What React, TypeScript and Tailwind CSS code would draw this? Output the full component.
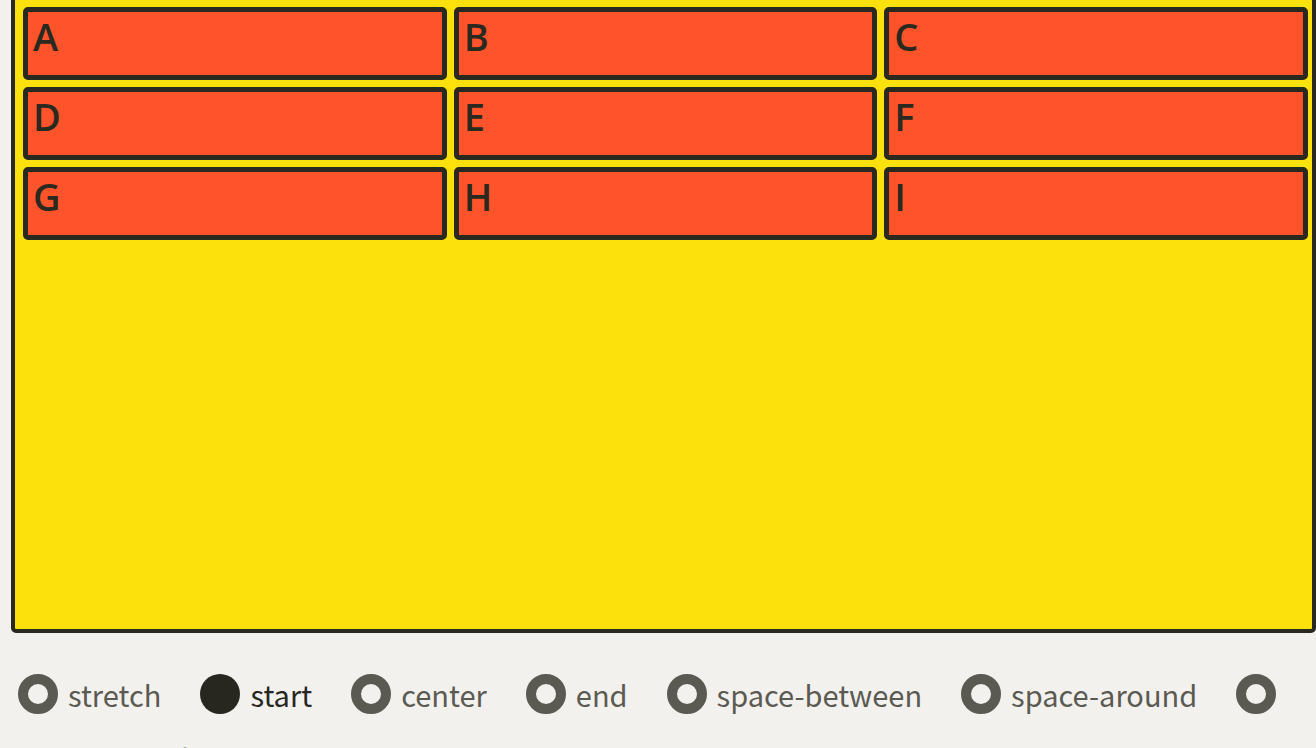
import React from "react";

const items = ["A", "B", "C", "D", "E", "F", "G", "H", "I"];
const options = ["stretch", "start", "center", "end", "space-between", "space-around", "space-evenly"];

export default function App() {
  return (
    <div className="min-h-screen w-full overflow-hidden bg-[#f2f1ed]">
      <div className="ml-[11px] mt-[-5px] w-[1305px] h-[638px] border-4 border-[#2a2920] rounded-[5px] bg-[#fde10d] pt-2 pl-2 pr-1 grid grid-cols-3 gap-[7px] content-start">
        {items.map((l) => (
          <div
            key={l}
            className="h-[73px] border-[5px] border-[#2a2920] rounded-[5px] bg-[#ff532c] pl-[5px] text-[38px] font-semibold text-[#2a2920] leading-[48px]"
            style={{ fontFamily: '"Open Sans", sans-serif' }}
          >
            {l}
          </div>
        ))}
      </div>
      <div
        className="mt-[41px] pl-[18px] flex flex-wrap items-center gap-y-6 text-[29px] leading-[40px]"
        style={{ fontFamily: '"Noto Sans CJK KR", sans-serif' }}
      >
        {options.map((o) => {
          const sel = o === "start";
          return (
            <React.Fragment key={o}>
              {sel ? (
                <span className="w-10 h-10 rounded-full bg-[#27261f] shrink-0" />
              ) : (
                <span className="w-10 h-10 rounded-full border-[10px] border-[#5b5a52] bg-[#f2f1ed] shrink-0" />
              )}
              <span className={`ml-[10px] mr-[39px] ${sel ? "text-[#27261f]" : "text-[#5b5a52]"}`}>{o}</span>
            </React.Fragment>
          );
        })}
      </div>
    </div>
  );
}
